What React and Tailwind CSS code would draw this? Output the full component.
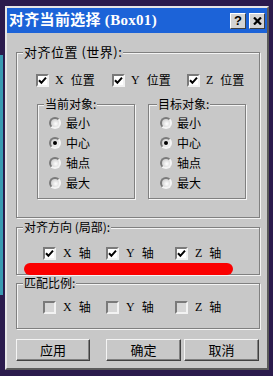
import React from "react";

const FONT = { fontFamily: '"Liberation Serif","Noto Sans CJK SC",serif' };
const CJK = { fontFamily: '"Noto Sans CJK SC","Liberation Sans",sans-serif' };

function Check({ checked }) {
  return (
    <div
      className={`w-[13px] h-[13px] border-2 border-t-[#7a7a7a] border-l-[#7a7a7a] border-r-[#f2f2f2] border-b-[#f2f2f2] flex items-center justify-center ${
        checked ? "bg-white" : "bg-[#d6d6d6]"
      }`}
    >
      {checked && (
        <svg width="9" height="9" viewBox="0 0 9 9">
          <path d="M1 4.2 L3.4 6.8 L8 1.6" stroke="#000" strokeWidth="2" fill="none" />
        </svg>
      )}
    </div>
  );
}

function CheckItem({ checked, letter, label, w, gap = "ml-[6px]" }) {
  return (
    <div className={`flex items-center h-[14px] ${w}`}>
      <Check checked={checked} />
      <span className={`${gap} text-[12px] leading-none`} style={FONT}>
        {letter}
      </span>
      <span className="ml-[7px] text-[12px] leading-none" style={CJK}>
        {label}
      </span>
    </div>
  );
}

function Radio({ on, label }) {
  return (
    <div className="flex items-center h-[14px]">
      <div className="w-[12px] h-[12px] rounded-full border-2 border-t-[#7a7a7a] border-l-[#7a7a7a] border-r-[#f4f4f4] border-b-[#f4f4f4] bg-[radial-gradient(circle_at_60%_60%,#ffffff,#c0c0c0)] flex items-center justify-center">
        {on && <div className="w-[4px] h-[4px] rounded-full bg-black" />}
      </div>
      <span className="ml-[5px] text-[12px] leading-none" style={CJK}>
        {label}
      </span>
    </div>
  );
}

function Group({ label, className, labelLeft = "left-[6px]", labelSize = "text-[12px]", children }) {
  return (
    <div
      className={`relative border border-[#808080] shadow-[inset_1px_1px_0_#f4f4f4,1px_1px_0_#f4f4f4] ${className}`}
    >
      <span
        className={`absolute -top-[8px] ${labelLeft} px-[1px] bg-[#c8c8c8] ${labelSize} leading-[14px] whitespace-nowrap`}
        style={CJK}
      >
        {label}
      </span>
      {children}
    </div>
  );
}

function Btn({ children, w }) {
  return (
    <div
      className={`${w} h-[22px] bg-[#c8c8c8] border border-t-[#f4f4f4] border-l-[#f4f4f4] border-r-[#404040] border-b-[#404040] shadow-[inset_-1px_-1px_0_#808080] flex items-center justify-center text-[13px]`}
      style={CJK}
    >
      {children}
    </div>
  );
}

export default function App() {
  return (
    <div className="relative w-[273px] h-[376px] bg-[#2b1b4d] overflow-hidden pt-[6px] pl-[5px] text-black">
      <div className="absolute left-0 top-[55px] w-[3px] h-[240px] bg-[#3a9ab2]" />
      <div className="w-[264px] h-[364px] bg-[#c8c8c8] border-2 border-t-[#e6e6e6] border-l-[#e6e6e6] border-r-[#5a5a5a] border-b-[#5a5a5a] flex flex-col">
        {/* title bar */}
        <div className="h-[25px] bg-[#1c63d8] flex items-center pl-[2px] pr-[2px]">
          <span className="text-white font-bold text-[15px] leading-none tracking-[0.3px] whitespace-nowrap" style={FONT}>
            对齐当前选择 (Box01)
          </span>
          <div className="ml-auto flex gap-[3px]">
            <div className="w-[16px] h-[16px] bg-[#d4d4d4] border border-t-[#fff] border-l-[#fff] border-r-[#404040] border-b-[#404040] flex items-center justify-center text-[13px] font-bold leading-none" style={{ fontFamily: '"Liberation Sans",sans-serif' }}>
              ?
            </div>
            <div className="w-[16px] h-[16px] bg-[#d4d4d4] border border-t-[#fff] border-l-[#fff] border-r-[#404040] border-b-[#404040] flex items-center justify-center">
              <svg width="9" height="8" viewBox="0 0 9 8">
                <path d="M1 0.5 L8 7.5 M8 0.5 L1 7.5" stroke="#000" strokeWidth="2.2" />
              </svg>
            </div>
          </div>
        </div>

        <div className="pl-[9px] flex flex-col">
          {/* group 1 */}
          <Group label="对齐位置 (世界):" labelSize="text-[13px] tracking-[0.5px]" className="mt-[19px] w-[244px] h-[166px]">
            <div className="flex mt-[20px] pl-[19px]">
              <CheckItem checked letter="X" label="位置" w="w-[76px]" />
              <CheckItem checked letter="Y" label="位置" w="w-[75px]" />
              <CheckItem checked letter="Z" label="位置" w="w-[70px]" />
            </div>
            <div className="flex mt-[17px] pl-[20px] gap-[13px]">
              <Group label="当前对象:" className="w-[98px] h-[95px]">
                <div className="flex flex-col gap-[6px] mt-[11px] pl-[11px]">
                  <Radio label="最小" />
                  <Radio on label="中心" />
                  <Radio label="轴点" />
                  <Radio label="最大" />
                </div>
              </Group>
              <Group label="目标对象:" labelLeft="left-[8px]" className="w-[98px] h-[95px]">
                <div className="flex flex-col gap-[6px] mt-[11px] pl-[11px]">
                  <Radio label="最小" />
                  <Radio on label="中心" />
                  <Radio label="轴点" />
                  <Radio label="最大" />
                </div>
              </Group>
            </div>
          </Group>

          {/* group 2 */}
          <Group label="对齐方向 (局部):" className="mt-[9px] w-[244px] h-[48px]">
            <div className="flex mt-[18px] pl-[26px]">
              <CheckItem checked letter="X" label="轴" w="w-[63px]" gap="ml-[7px]" />
              <CheckItem checked letter="Y" label="轴" w="w-[69px]" gap="ml-[7px]" />
              <CheckItem checked letter="Z" label="轴" w="w-[60px]" gap="ml-[7px]" />
            </div>
          </Group>

          {/* group 3 */}
          <Group label="匹配比例:" className="mt-[8px] w-[244px] h-[46px]">
            <div className="flex mt-[16px] pl-[26px]">
              <CheckItem letter="X" label="轴" w="w-[63px]" gap="ml-[7px]" />
              <CheckItem letter="Y" label="轴" w="w-[69px]" gap="ml-[7px]" />
              <CheckItem letter="Z" label="轴" w="w-[60px]" gap="ml-[7px]" />
            </div>
          </Group>

          {/* buttons */}
          <div className="flex mt-[10px]">
            <Btn w="w-[74px]">应用</Btn>
            <div className="ml-[16px]">
              <Btn w="w-[75px]">确定</Btn>
            </div>
            <div className="ml-[3px]">
              <Btn w="w-[75px]">取消</Btn>
            </div>
          </div>
        </div>
      </div>
      {/* red annotation stroke */}
      <div className="absolute left-[24px] top-[263px] w-[209px] h-[12px] rounded-full bg-[#fa0000]" />
    </div>
  );
}
